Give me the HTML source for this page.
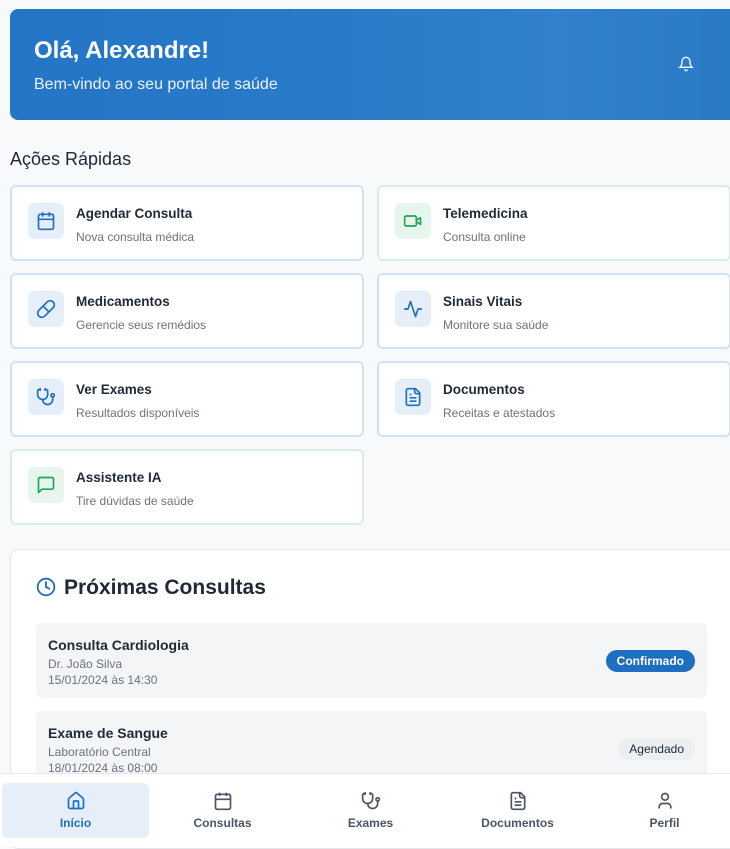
<!DOCTYPE html>
<html><head><meta charset="utf-8"><style>
*{box-sizing:border-box;margin:0;padding:0}
body{width:730px;height:847px;overflow:hidden;background:#f7f9fb;font-family:"Liberation Sans",sans-serif;color:#1f2937;position:relative}
.banner{position:absolute;left:10px;top:9px;width:730px;height:111px;border-radius:8px;background:linear-gradient(90deg,#2475c6 0%,#2a7bc9 50%,#3381cb 75%,#2a79c6 100%);overflow:hidden}
.banner h1{position:absolute;left:24px;top:28px;color:#fff;font-size:24px;font-weight:bold}
.banner p{position:absolute;left:24px;top:67px;color:#eaf2fb;font-size:16px}
.bell{position:absolute;left:668px;top:47px}
h2{position:absolute;left:10px;top:149px;font-size:18px;font-weight:normal;color:#1f2937}
.card{position:absolute;width:354px;height:76px;background:#fff;border:2px solid #d3e2f3;border-radius:6px}
.card.g{border-color:#d8efe0}
.ic{position:absolute;left:16px;top:16px;width:36px;height:36px;border-radius:6px;background:#e6eff9;display:flex;align-items:center;justify-content:center}
.g .ic{background:#e6f6ec}
.card b{position:absolute;left:64px;top:19px;font-size:13.5px;font-weight:bold;color:#1f2937}
.card span{position:absolute;left:64px;top:43px;font-size:12px;color:#6b7280}
.panel{position:absolute;left:10px;top:549px;width:730px;height:300px;background:#fff;border:1px solid #e3e7ec;border-radius:8px}
.panel h3{position:absolute;left:53px;top:26px;font-size:21px;font-weight:bold;color:#1f2937}
.item{position:absolute;left:25px;width:671px;height:75px;background:#f3f5f7;border-radius:6px}
.item b{position:absolute;left:12px;top:14px;font-size:14px;font-weight:bold}
.item .s{position:absolute;left:12px;font-size:12px;color:#6b7280}
.badge{position:absolute;right:12px;top:27px;height:22px;padding:0 11px;border-radius:11px;font-size:12px;font-weight:bold;line-height:22px}
.nav{position:absolute;left:0;top:773px;width:730px;height:74px;background:#fff;border-top:1px solid #e3e7ec}
.tab{position:absolute;top:9px;width:147px;height:55px;border-radius:6px;text-align:center;font-size:12px;color:#4b5563;font-weight:bold}
.tab svg{display:block;margin:8px auto 5px}
.tab.a{background:#e6eff9;color:#1f6fc0}
</style></head><body>
<div class="banner">
<h1>Olá, Alexandre!</h1>
<p>Bem-vindo ao seu portal de saúde</p>
<svg class="bell" width="16" height="16" viewBox="0 0 24 24" fill="none" stroke="#fff" stroke-width="2" stroke-linecap="round"><path d="M6 8a6 6 0 0 1 12 0c0 7 3 9 3 9H3s3-2 3-9"/><path d="M10.3 21a1.94 1.94 0 0 0 3.4 0"/></svg>
</div>
<h2>Ações Rápidas</h2>

<div class="card" style="left:10px;top:185px"><div class="ic"><svg width="20" height="20" viewBox="0 0 24 24" fill="none" stroke="#1f6fc0" stroke-width="2" stroke-linecap="round"><rect x="3" y="4" width="18" height="18" rx="2"/><path d="M16 2v4M8 2v4M3 10h18"/></svg></div><b>Agendar Consulta</b><span>Nova consulta médica</span></div>
<div class="card g" style="left:377px;top:185px"><div class="ic"><svg width="20" height="20" viewBox="0 0 24 24" fill="none" stroke="#22a55a" stroke-width="2" stroke-linejoin="round"><path d="m16 13 5 3V8l-5 3"/><rect x="2" y="6" width="14" height="12" rx="2"/></svg></div><b>Telemedicina</b><span>Consulta online</span></div>
<div class="card" style="left:10px;top:273px"><div class="ic"><svg width="20" height="20" viewBox="0 0 24 24" fill="none" stroke="#1f6fc0" stroke-width="2"><path d="m10.5 20.5 10-10a4.95 4.95 0 1 0-7-7l-10 10a4.95 4.95 0 1 0 7 7Z"/><path d="m8.5 8.5 7 7"/></svg></div><b>Medicamentos</b><span>Gerencie seus remédios</span></div>
<div class="card" style="left:377px;top:273px"><div class="ic"><svg width="20" height="20" viewBox="0 0 24 24" fill="none" stroke="#1f6fc0" stroke-width="2" stroke-linejoin="round" stroke-linecap="round"><path d="M22 12h-4l-3 9L9 3l-3 9H2"/></svg></div><b>Sinais Vitais</b><span>Monitore sua saúde</span></div>
<div class="card" style="left:10px;top:361px"><div class="ic"><svg width="20" height="20" viewBox="0 0 24 24" fill="none" stroke="#1f6fc0" stroke-width="2" stroke-linecap="round"><path d="M5 2v2M11 2v2M5 3H4a2 2 0 0 0-2 2v4a6 6 0 0 0 12 0V5a2 2 0 0 0-2-2h-1"/><path d="M8 15a6 6 0 0 0 12 0v-3"/><circle cx="20" cy="10" r="2"/></svg></div><b>Ver Exames</b><span>Resultados disponíveis</span></div>
<div class="card" style="left:377px;top:361px"><div class="ic"><svg width="20" height="20" viewBox="0 0 24 24" fill="none" stroke="#1f6fc0" stroke-width="2" stroke-linejoin="round"><path d="M15 2H6a2 2 0 0 0-2 2v16a2 2 0 0 0 2 2h12a2 2 0 0 0 2-2V7Z"/><path d="M14 2v4a2 2 0 0 0 2 2h4M10 9H8M16 13H8M16 17H8"/></svg></div><b>Documentos</b><span>Receitas e atestados</span></div>
<div class="card g" style="left:10px;top:449px"><div class="ic"><svg width="20" height="20" viewBox="0 0 24 24" fill="none" stroke="#22a55a" stroke-width="2" stroke-linejoin="round"><path d="M21 15a2 2 0 0 1-2 2H7l-4 4V5a2 2 0 0 1 2-2h14a2 2 0 0 1 2 2z"/></svg></div><b>Assistente IA</b><span>Tire dúvidas de saúde</span></div>

<div class="panel">
<svg style="position:absolute;left:25px;top:27px" width="20" height="20" viewBox="0 0 24 24" fill="none" stroke="#1f6fc0" stroke-width="2.2" stroke-linecap="round"><circle cx="12" cy="12" r="10"/><path d="M12 6v6l4 2"/></svg>
<h3>Próximas Consultas</h3>
<div class="item" style="top:73px"><b>Consulta Cardiologia</b><div class="s" style="top:34px">Dr. João Silva</div><div class="s" style="top:50px">15/01/2024 às 14:30</div><div class="badge" style="background:#1f6fc0;color:#fff">Confirmado</div></div>
<div class="item" style="top:161px"><b>Exame de Sangue</b><div class="s" style="top:34px">Laboratório Central</div><div class="s" style="top:50px">18/01/2024 às 08:00</div><div class="badge" style="background:#eceff2;color:#1f2937;font-weight:normal">Agendado</div></div>
</div>

<div class="nav">
<div class="tab a" style="left:2px"><svg width="20" height="20" viewBox="0 0 24 24" fill="none" stroke="#1f6fc0" stroke-width="2" stroke-linejoin="round"><path d="M15 21v-8a1 1 0 0 0-1-1h-4a1 1 0 0 0-1 1v8"/><path d="M3 10a2 2 0 0 1 .7-1.5l7-6a2 2 0 0 1 2.6 0l7 6A2 2 0 0 1 21 10v9a2 2 0 0 1-2 2H5a2 2 0 0 1-2-2z"/></svg>Início</div>
<div class="tab" style="left:149px"><svg width="20" height="20" viewBox="0 0 24 24" fill="none" stroke="#4b5563" stroke-width="2"><rect x="3" y="4" width="18" height="18" rx="2"/><path d="M16 2v4M8 2v4M3 10h18"/></svg>Consultas</div>
<div class="tab" style="left:297px"><svg width="20" height="20" viewBox="0 0 24 24" fill="none" stroke="#4b5563" stroke-width="2" stroke-linecap="round"><path d="M5 2v2M11 2v2M5 3H4a2 2 0 0 0-2 2v4a6 6 0 0 0 12 0V5a2 2 0 0 0-2-2h-1"/><path d="M8 15a6 6 0 0 0 12 0v-3"/><circle cx="20" cy="10" r="2"/></svg>Exames</div>
<div class="tab" style="left:444px"><svg width="20" height="20" viewBox="0 0 24 24" fill="none" stroke="#4b5563" stroke-width="2"><path d="M15 2H6a2 2 0 0 0-2 2v16a2 2 0 0 0 2 2h12a2 2 0 0 0 2-2V7Z"/><path d="M14 2v4a2 2 0 0 0 2 2h4M10 9H8M16 13H8M16 17H8"/></svg>Documentos</div>
<div class="tab" style="left:591px"><svg width="20" height="20" viewBox="0 0 24 24" fill="none" stroke="#4b5563" stroke-width="2"><path d="M19 21v-2a4 4 0 0 0-4-4H9a4 4 0 0 0-4 4v2"/><circle cx="12" cy="7" r="4"/></svg>Perfil</div>
</div>
</body></html>
